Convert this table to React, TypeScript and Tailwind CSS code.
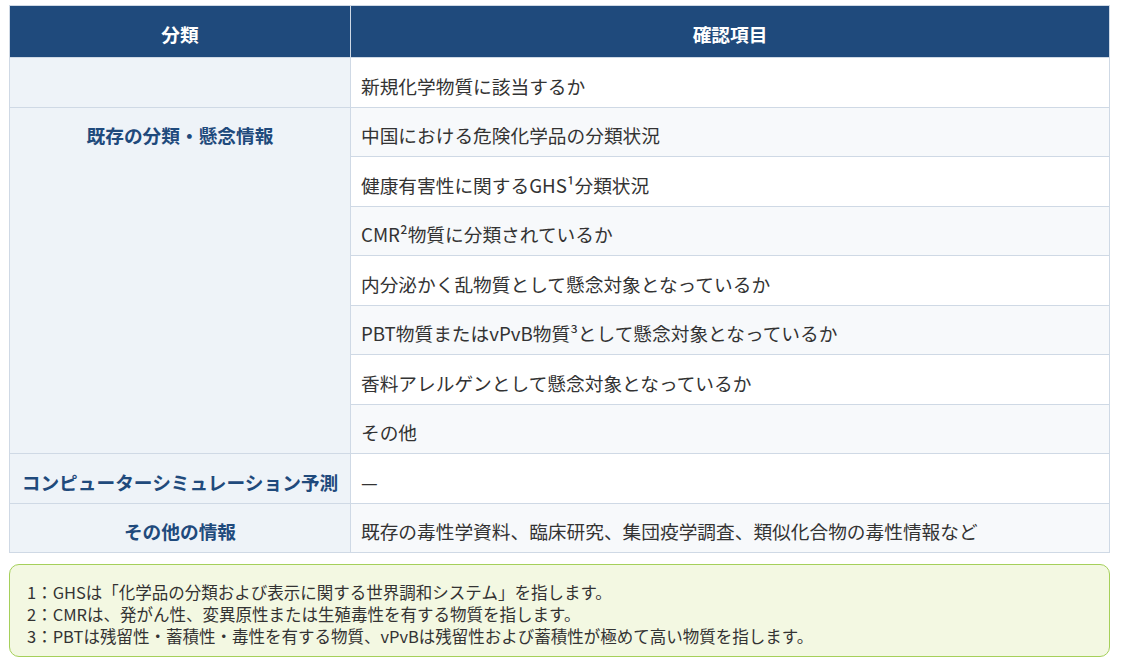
const rows: { label?: string; span?: number; text: React.ReactNode }[] = [
  { label: '', span: 1, text: '新規化学物質に該当するか' },
  { label: '既存の分類・懸念情報', span: 7, text: '中国における危険化学品の分類状況' },
  { text: '健康有害性に関するGHS¹分類状況' },
  { text: 'CMR²物質に分類されているか' },
  { text: '内分泌かく乱物質として懸念対象となっているか' },
  { text: 'PBT物質またはvPvB物質³として懸念対象となっているか' },
  { text: '香料アレルゲンとして懸念対象となっているか' },
  { text: 'その他' },
  { label: 'コンピューターシミュレーション予測', span: 1, text: '—' },
  { label: 'その他の情報', span: 1, text: '既存の毒性学資料、臨床研究、集団疫学調査、類似化合物の毒性情報など' },
];

const notes = [
  '1：GHSは「化学品の分類および表示に関する世界調和システム」を指します。',
  '2：CMRは、発がん性、変異原性または生殖毒性を有する物質を指します。',
  '3：PBTは残留性・蓄積性・毒性を有する物質、vPvBは残留性および蓄積性が極めて高い物質を指します。',
];

export default function App() {
  return (
    <div
      className="min-h-screen bg-white pl-[9px] pr-[11px] pt-[5px] text-[#333]"
      style={{ fontFamily: '"Noto Sans CJK JP", "Noto Sans", sans-serif' }}
    >
      <table className="w-[1101px] table-fixed border-collapse border border-[#cfd9e5] text-[18.7px]">
        <colgroup>
          <col className="w-[341px]" />
          <col />
        </colgroup>
        <thead>
          <tr className="h-[52px] bg-[#1f4a7c] text-white">
            <th className="border-r border-[#cfd9e5] pt-[5px] text-center font-bold">分類</th>
            <th className="pt-[5px] text-center font-bold">確認項目</th>
          </tr>
        </thead>
        <tbody>
          {rows.map((r, i) => (
            <tr key={i} className={`h-[49.5px] ${i % 2 === 0 ? 'bg-white' : 'bg-[#f7f9fb]'}`}>
              {r.span !== undefined && (
                <td
                  rowSpan={r.span}
                  className="border border-[#cfd9e5] bg-[#eef3f8] px-2 pt-[7px] pb-0 text-center align-top font-bold text-[#1f4a7c]"
                >
                  <div className="flex h-[41.5px] items-center justify-center whitespace-nowrap">{r.label}</div>
                </td>
              )}
              <td className="border border-[#cfd9e5] px-[10px] pt-[7px] pb-0 align-top">
                <div className="flex h-[41.5px] items-center">{r.text}</div>
              </td>
            </tr>
          ))}
        </tbody>
      </table>

      <div className="mt-[11px] w-[1101px] rounded-[10px] border border-[#a5d05a] bg-[#f3f8e2] px-[17px] pt-[16px] pb-[9px] text-[16.5px] leading-[22px]">
        {notes.map((n) => (
          <div key={n}>{n}</div>
        ))}
      </div>
    </div>
  );
}
